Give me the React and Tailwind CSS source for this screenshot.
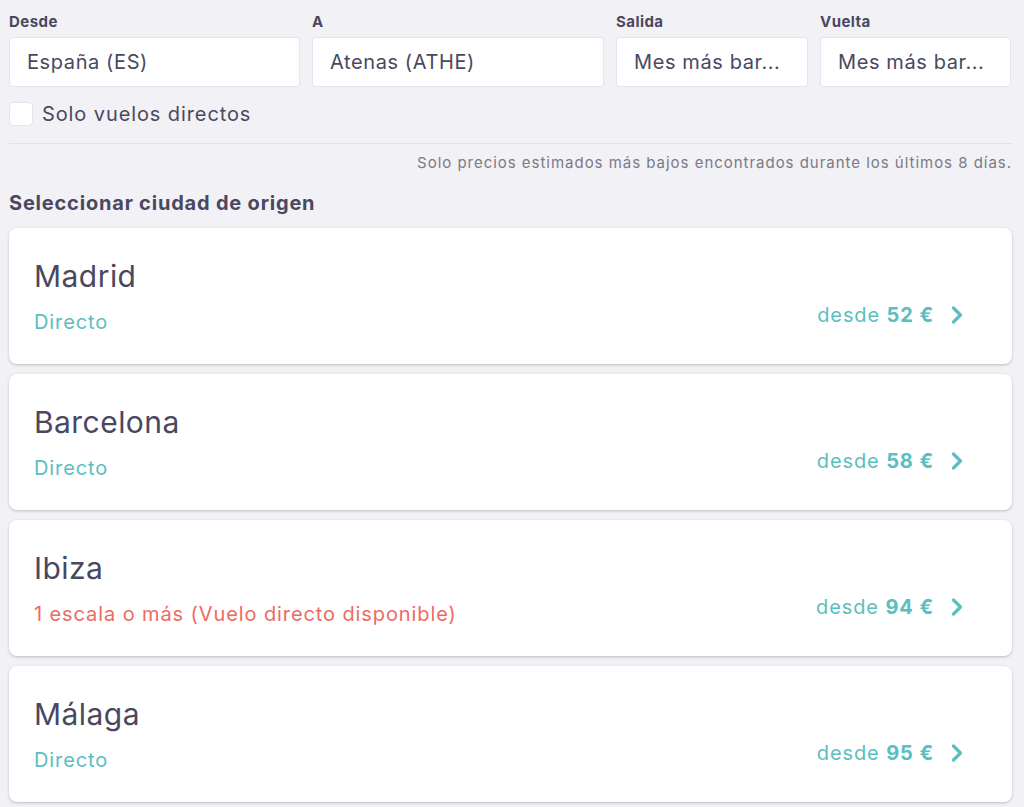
const fields = [
  { label: "Desde", value: "España (ES)", w: "w-[291px]" },
  { label: "A", value: "Atenas (ATHE)", w: "w-[292px]" },
  { label: "Salida", value: "Mes más bar...", w: "w-[192px]" },
  { label: "Vuelta", value: "Mes más bar...", w: "w-[191px]" },
];

const cities = [
  { name: "Madrid", note: "Directo", direct: true, price: "52 €" },
  { name: "Barcelona", note: "Directo", direct: true, price: "58 €" },
  { name: "Ibiza", note: "1 escala o más (Vuelo directo disponible)", direct: false, price: "94 €" },
  { name: "Málaga", note: "Directo", direct: true, price: "95 €" },
];

const Chevron = () => (
  <svg width="14" height="20" viewBox="0 0 14 20" fill="none">
    <path d="M3.5 3 L10.5 10 L3.5 17" stroke="#5bbec0" strokeWidth="3.2" strokeLinecap="round" strokeLinejoin="round" />
  </svg>
);

export default function App() {
  return (
    <div
      className="min-h-screen bg-[#f2f1f5] pl-[9px] pr-[12px] pt-[12px] text-[#4a4860]"
      style={{ fontFamily: "Inter, 'Noto Sans', sans-serif" }}
    >
      <div className="flex gap-3">
        {fields.map((f) => (
          <div key={f.label} className={f.w}>
            <div className="text-[15px] font-bold leading-[20px] tracking-[0.03em] mb-[5px]">{f.label}</div>
            <div className="h-[50px] bg-white rounded-[4px] border border-[#e6e5eb] flex items-center pl-[17px] text-[20px] tracking-[0.03em] whitespace-nowrap overflow-hidden">
              {f.value}
            </div>
          </div>
        ))}
      </div>

      <label className="flex items-center gap-[9px] mt-[14px]">
        <span className="w-[24px] h-[24px] bg-white rounded-[4px] border border-[#e6e5eb]" />
        <span className="text-[20px] leading-[26px] tracking-[0.045em]">Solo vuelos directos</span>
      </label>

      <div className="border-t border-[#e3e2e8] mt-[16px]" />

      <div className="text-right text-[15px] leading-[20px] tracking-[0.065em] text-[#7b7a85] mt-[9px]">
        Solo precios estimados más bajos encontrados durante los últimos 8 días.
      </div>

      <div className="text-[20px] font-bold leading-[26px] tracking-[0.04em] mt-[17px]">Seleccionar ciudad de origen</div>

      <div className="flex flex-col gap-[10px] mt-[12px] pb-4">
        {cities.map((c) => (
          <div
            key={c.name}
            className="bg-white rounded-[8px] shadow-[0_1px_3px_rgba(0,0,0,0.22)] pl-[25px] pr-[48px] pt-[30px] pb-[28px] flex items-end justify-between"
          >
            <div>
              <div className="text-[30px] leading-[36px] tracking-[0.015em]">{c.name}</div>
              <div className={`text-[20px] leading-[28px] tracking-[0.045em] mt-[14px] ${c.direct ? "text-[#5bbec0]" : "text-[#ec6b63]"}`}>
                {c.note}
              </div>
            </div>
            <div className="flex items-center gap-[16px] mb-[7px] text-[#5bbec0] text-[20px] leading-[28px] tracking-[0.045em]">
              <span>
                desde <span className="font-bold">{c.price}</span>
              </span>
              <Chevron />
            </div>
          </div>
        ))}
      </div>
    </div>
  );
}
